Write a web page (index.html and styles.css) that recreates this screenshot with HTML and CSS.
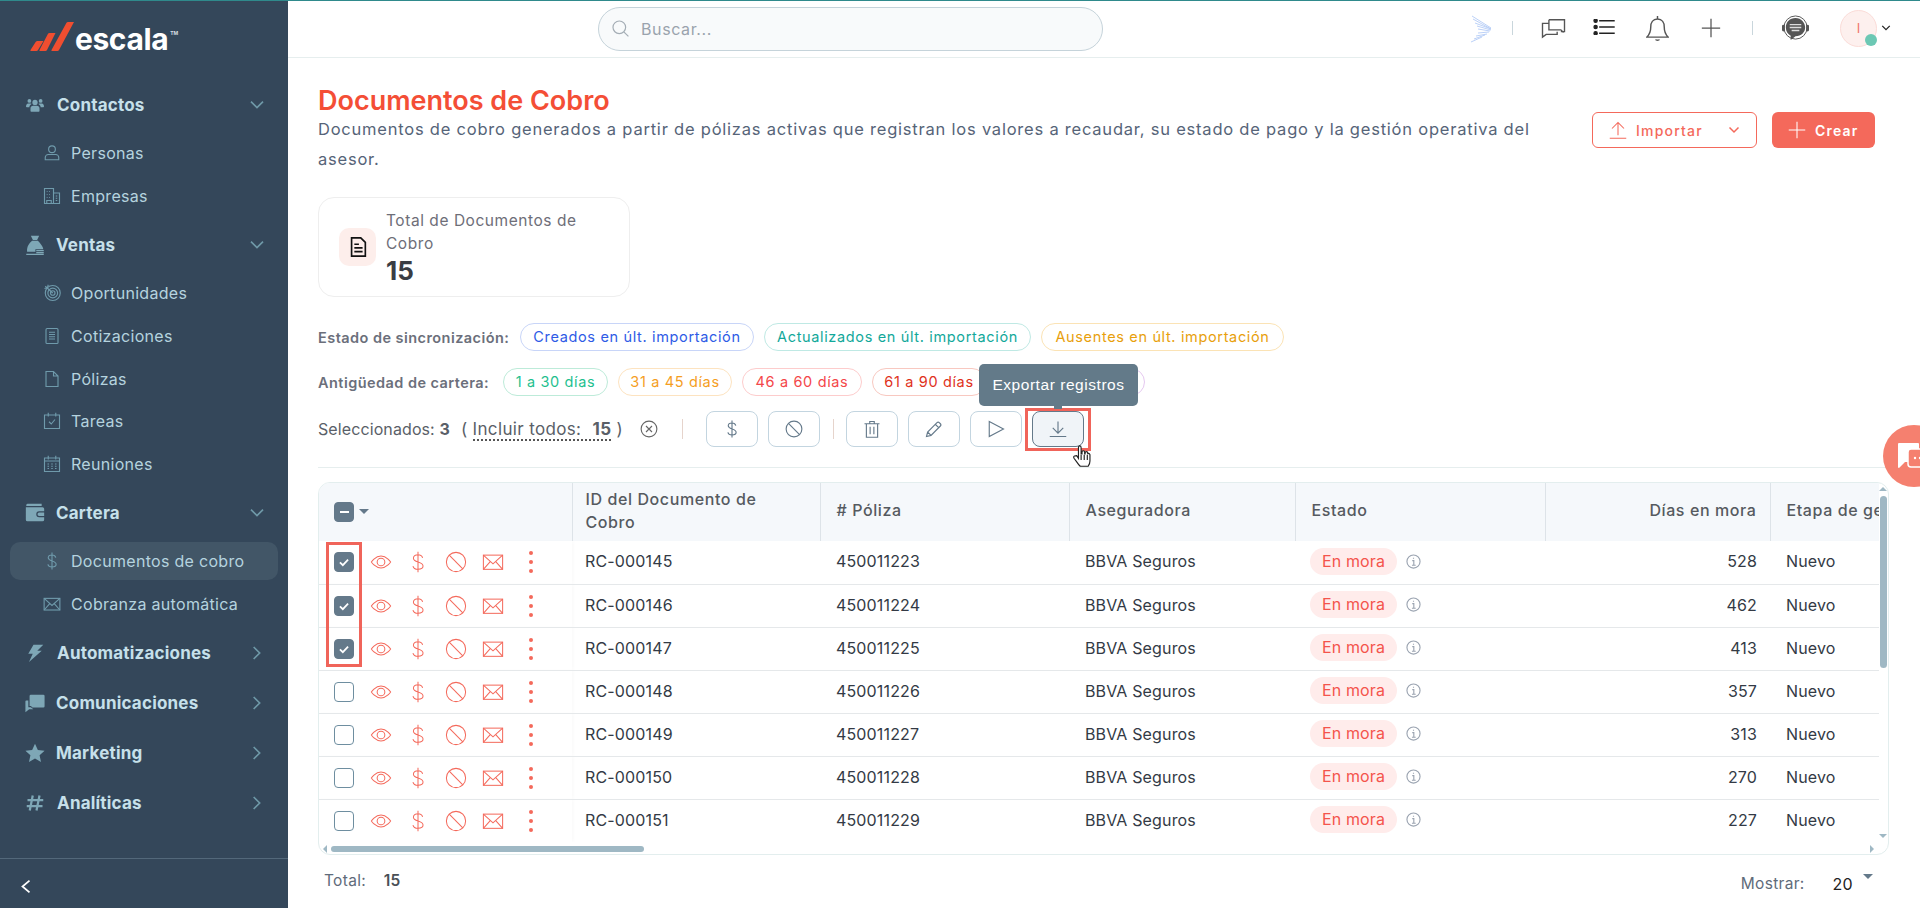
FILE: index.html
```html
<!DOCTYPE html>
<html lang="es">
<head>
  <meta charset="utf-8">
  <title>Documentos de Cobro</title>
  <link rel="stylesheet" href="styles.css">
</head>
<body>
  <svg class="sprite" xmlns="http://www.w3.org/2000/svg">
    <symbol id="i-eye" viewBox="0 0 24 24"><path d="M1.500 12S5.500 5.500 12 5.500 22.500 12 22.500 12 18.500 18.500 12 18.500 1.500 12 1.500 12z"/><circle cx="12" cy="12" r="4.200"/></symbol>
    <symbol id="i-dollar" viewBox="0 0 24 24"><path d="M17 7.500C16.500 5.300 14.500 4 12 4 9 4 7 5.600 7 7.800c0 5.200 10.500 3 10.500 8.600 0 2.300-2.300 3.600-5.500 3.600-2.800 0-5-1.300-5.500-3.500M12 .8v22.400"/></symbol>
    <symbol id="i-ban" viewBox="0 0 24 24"><circle cx="12" cy="12" r="10.500"/><path d="M4.600 4.600l14.800 14.800"/></symbol>
    <symbol id="i-mail" viewBox="0 0 24 24"><rect x="1.500" y="4.500" width="21" height="15.500"/><path d="M1.500 4.500L12 14 22.500 4.500M1.500 20l7.500-8.500M22.500 20L15 11.500"/></symbol>
    <symbol id="i-info" viewBox="0 0 24 24"><circle cx="12" cy="12" r="10.500"/><path d="M10 10.500h2.500V18M9.500 18h6M12 6v1.500"/></symbol>
    <symbol id="i-check" viewBox="0 0 24 24"><path d="M5 12.500l5 5L19 8"/></symbol>
    <symbol id="i-down" viewBox="0 0 24 24"><path d="M3 7l9 9 9-9"/></symbol>
    <symbol id="i-right" viewBox="0 0 24 24"><path d="M7 3l9 9-9 9"/></symbol>
  </svg>

  <aside class="sidebar">
    <div class="brand">
      <svg class="brand-mark" viewBox="0 0 44 30"><path d="M1 30h5.500q1 0 1.500-1L13.500 20H7.500q-1 0-1.700.700L.5 29q-.5 1 .5 1zM10 30h5.500q1 0 1.500-1L25.500 12H19.500q-1 0-1.500.7L9.500 29q-.5 1 .5 1zM22 30h5.500q1 0 1.500-1L44 1H38q-1 0-1.500.7L21.500 29q-.5 1 .5 1z"/></svg>
      <span class="brand-name">escala</span><span class="brand-tm">TM</span>
    </div>
    <nav class="nav">
      <a class="nav-head">
        <svg class="nav-icon" viewBox="0 0 24 24"><circle cx="12" cy="8.500" r="3.500"/><circle cx="4.500" cy="6.500" r="2.500"/><circle cx="19.500" cy="6.500" r="2.500"/><path d="M6 20v-3.500c0-2 1.500-3.500 3.500-3.500h5c2 0 3.500 1.500 3.500 3.500V20q0 1-1 1H7q-1 0-1-1zM0 14c0-2 1-4 3-4h3c.5 0 1 .2 1.300.5C5.500 11.500 4.500 13 4.500 15H1q-1 0-1-1zM24 14c0-2-1-4-3-4h-3c-.5 0-1 .2-1.300.5 1.800 1 2.800 2.500 2.800 4.500H23q1 0 1-1z"/></svg>
        <span class="nav-label">Contactos</span>
        <svg class="nav-arrow"><use href="#i-down"/></svg>
      </a>
      <div class="nav-subs">
        <a class="nav-sub"><svg class="sub-icon" viewBox="0 0 24 24"><circle cx="12" cy="7" r="4.500"/><path d="M3 21v-3c0-2 2-4 4-4h10c2 0 4 2 4 4v3z"/></svg>Personas</a>
        <a class="nav-sub"><svg class="sub-icon" viewBox="0 0 24 24"><path d="M2 22V2h12v20zM14 8h8v14h-8zM5 6h1M8 6h1M11 6h0M5 10h1M8 10h1M5 14h1M8 14h1M17 12h2M17 15h2M17 18h2M5 22v-4h6v4"/></svg>Empresas</a>
      </div>
      <a class="nav-head">
        <svg class="nav-icon nav-icon-big" viewBox="0 0 24 24"><path d="M7 1h10l-2.500 5h-5zM8.500 7h7c3 3 6 7 6.500 10H12.500v3H2.500C2 14 5 10 8.500 7zM13.500 18h9v1.500h-9zM13.500 20.500h9V22h-9zM1.500 22.500h21V24h-21z"/></svg>
        <span class="nav-label">Ventas</span>
        <svg class="nav-arrow"><use href="#i-down"/></svg>
      </a>
      <div class="nav-subs">
        <a class="nav-sub"><svg class="sub-icon" viewBox="0 0 24 24"><circle cx="13" cy="12" r="10"/><circle cx="13" cy="12" r="6.500"/><circle cx="13" cy="12" r="3"/><path d="M3 3l10 9M2 6l4-1 1-4"/></svg>Oportunidades</a>
        <a class="nav-sub"><svg class="sub-icon" viewBox="0 0 24 24"><rect x="4" y="2" width="16" height="20" rx="1.500"/><path d="M8 7h8M8 10h8M8 13h8M8 16h8"/></svg>Cotizaciones</a>
        <a class="nav-sub"><svg class="sub-icon" viewBox="0 0 24 24"><path d="M4 2h10l6 6v14H4zM14 2v6h6"/></svg>Pólizas</a>
        <a class="nav-sub"><svg class="sub-icon" viewBox="0 0 24 24"><path d="M2 4h20v18H2zM7 1v5M17 1v5M8 13l3 3 5-6"/></svg>Tareas</a>
        <a class="nav-sub"><svg class="sub-icon" viewBox="0 0 24 24"><path d="M2 4h20v18H2zM7 1v5M17 1v5M2 8h20M6 12h2M11 12h2M16 12h2M6 15h2M11 15h2M16 15h2M6 18h2M11 18h2M16 18h2"/></svg>Reuniones</a>
      </div>
      <a class="nav-head">
        <svg class="nav-icon nav-icon-big" viewBox="0 0 24 24"><path d="M3 1h17v2.500H1.500C1.500 2 2 1 3 1zM1 5h20q2 0 2 2v3h-6q-3.500 0-3.500 3.500t3.500 3.500h6v3q0 2-2 2H3q-2 0-2-2zM17 11.500h6v4h-6q-2 0-2-2t2-2z"/></svg>
        <span class="nav-label">Cartera</span>
        <svg class="nav-arrow"><use href="#i-down"/></svg>
      </a>
      <div class="nav-subs">
        <a class="nav-sub active"><svg class="sub-icon"><use href="#i-dollar"/></svg>Documentos de cobro</a>
        <a class="nav-sub"><svg class="sub-icon"><use href="#i-mail"/></svg>Cobranza automática</a>
      </div>
      <a class="nav-head">
        <svg class="nav-icon" viewBox="0 0 24 24"><path d="M10 1h13l-8 8h6L4 24l5-11H3z"/></svg>
        <span class="nav-label">Automatizaciones</span>
        <svg class="nav-arrow nav-arrow-right"><use href="#i-right"/></svg>
      </a>
      <a class="nav-head">
        <svg class="nav-icon nav-icon-big" viewBox="0 0 24 24"><path d="M7 2h15q1.500 0 1.500 1.500V16q0 1.500-1.500 1.500H9L7 15.500H5.500V3.500Q5.500 2 7 2zM1.500 9H4v8h3l3 2.500H5L.5 23V10q0-1 1-1z"/></svg>
        <span class="nav-label">Comunicaciones</span>
        <svg class="nav-arrow nav-arrow-right"><use href="#i-right"/></svg>
      </a>
      <a class="nav-head">
        <svg class="nav-icon nav-icon-big" viewBox="0 0 24 24"><path d="M12 1l3.400 7.400 8.100.9-6 5.500 1.700 8L12 18.700 4.800 22.800l1.700-8-6-5.500 8.100-.9z"/></svg>
        <span class="nav-label">Marketing</span>
        <svg class="nav-arrow nav-arrow-right"><use href="#i-right"/></svg>
      </a>
      <a class="nav-head">
        <svg class="nav-icon nav-icon-hash" viewBox="0 0 24 24"><path d="M9 2L5 22M18 2l-4 20M2 8h21M1 16h21"/></svg>
        <span class="nav-label">Analíticas</span>
        <svg class="nav-arrow nav-arrow-right"><use href="#i-right"/></svg>
      </a>
    </nav>
    <div class="side-foot">
      <svg class="collapse" viewBox="0 0 24 24"><path d="M18 2L6 12l12 10"/></svg>
    </div>
  </aside>

  <div class="main">
    <header class="topbar">
      <div class="search">
        <svg class="search-icon" viewBox="0 0 24 24"><circle cx="10.500" cy="10.500" r="8"/><path d="M16.500 16.500L22 22"/></svg>
        <span>Buscar...</span>
      </div>
      <div class="top-tools">
        <svg class="wing" viewBox="0 0 24 28"><path d="M3 1L22 13M4 4L22 14M6 8L22 14M8 11L22 15M9 14L21 16M9 18L20 17M7 21L18 19M5 24L16 20M2 27L13 22"/></svg>
        <span class="tool-sep"></span>
        <svg class="tool tool-chat" viewBox="0 0 26 24"><path d="M8 3h17v13h-4M8 3v11h13l3 3M8 7H1v15l4-3h12v-3"/></svg>
        <svg class="tool tool-list" viewBox="0 0 24 18"><circle cx="2" cy="2" r="1.800"/><circle cx="2" cy="9" r="1.800"/><circle cx="2" cy="16" r="1.800"/><path d="M6 2h17.500M6 9h17.500M6 16h17.500"/></svg>
        <svg class="tool tool-bell" viewBox="0 0 24 28"><path d="M12 1v3M12 4c-5 0-7 4-7 8 0 5-1 8-4 11h22c-3-3-4-6-4-11 0-4-2-8-7-8zM1 23h22M10 25.500c.5 1 3.500 1 4 0"/></svg>
        <svg class="tool tool-plus" viewBox="0 0 24 24"><path d="M12 1v22M1 12h22"/></svg>
        <span class="tool-sep tool-sep-r"></span>
        <svg class="tool-agent" viewBox="0 0 30 28"><circle cx="15" cy="13" r="12" fill="none" stroke="#555" stroke-width="1"/><path d="M15 3c-6 0-10 4-10 10 0 4 2 7 5 8.500V26l5-4c6 0 10-4 10-9s-4-10-10-10z"/><rect x="1" y="10" width="3" height="7" rx="1.500"/><rect x="26" y="10" width="3" height="7" rx="1.500"/><path class="agent-lines" d="M9 10h12M9 13h12M11 16h8"/></svg>
        <div class="avatar">I<span class="avatar-dot"></span></div>
        <svg class="avatar-arrow"><use href="#i-down"/></svg>
      </div>
    </header>

    <main class="content">
      <section class="page-head">
        <div class="page-text">
          <h1>Documentos de Cobro</h1>
          <p>Documentos de cobro generados a partir de pólizas activas que registran los valores a recaudar, su estado de pago y la gestión operativa del asesor.</p>
        </div>
        <div class="page-actions">
          <button class="btn btn-outline">
            <svg class="btn-icon" viewBox="0 0 24 24"><path d="M12 19V3M4 10l8-8 8 8M1 23h22"/></svg>
            <span>Importar</span>
            <svg class="btn-arrow"><use href="#i-down"/></svg>
          </button>
          <button class="btn btn-solid">
            <svg class="btn-icon" viewBox="0 0 24 24"><path d="M12 1v22M1 12h22"/></svg>
            <span>Crear</span>
          </button>
        </div>
      </section>

      <section class="stat-card">
        <div class="stat-icon">
          <svg viewBox="0 0 24 24"><path d="M5 2h10l5 5v15H5zM8 9h5M8 13h9M8 17h9"/></svg>
        </div>
        <div class="stat-text">
          <div class="stat-label">Total de Documentos de Cobro</div>
          <div class="stat-value">15</div>
        </div>
      </section>

      <div class="chip-row chip-row-sync">
        <span class="chip-title">Estado de sincronización:</span>
        <span class="chip chip-created">Creados en últ. importación</span>
        <span class="chip chip-updated">Actualizados en últ. importación</span>
        <span class="chip chip-missing">Ausentes en últ. importación</span>
      </div>
      <div class="chip-row chip-row-age">
        <span class="chip-title">Antigüedad de cartera:</span>
        <span class="chip chip-30">1 a 30 días</span>
        <span class="chip chip-45">31 a 45 días</span>
        <span class="chip chip-60">46 a 60 días</span>
        <span class="chip chip-90">61 a 90 días</span>
        <span class="chip chip-more"></span>
      </div>

      <div class="selection">
        <div class="sel-info">
          <span>Seleccionados: <b>3</b></span>
          <span class="sel-all">( <span class="sel-link">Incluir todos: <b>15</b></span> )</span>
          <svg class="sel-clear" viewBox="0 0 24 24"><circle cx="12" cy="12" r="10.500"/><path d="M8 8l8 8M16 8l-8 8"/></svg>
        </div>
        <span class="sel-sep sel-sep-first"></span>
        <button class="act"><svg><use href="#i-dollar"/></svg></button>
        <button class="act"><svg><use href="#i-ban"/></svg></button>
        <span class="sel-sep"></span>
        <button class="act"><svg viewBox="0 0 24 24"><path d="M2 5h20M9 5V2h6v3M4.500 5v18h15V5M9.500 9v10M14.500 9v10"/></svg></button>
        <button class="act"><svg viewBox="0 0 24 24"><path d="M2 22l1.500-6L16 3.500q1.500-1.500 3 0l1.500 1.500q1.500 1.500 0 3L8 20.500zM3.500 16L8 20.500M14 6l4.500 4.500"/></svg></button>
        <button class="act"><svg viewBox="0 0 24 24"><path d="M3 2l19 10L3 22z"/></svg></button>
        <button class="act act-hover">
          <svg viewBox="0 0 24 24"><path d="M12 2v15M5 10.500l7 7 7-7M1 22h22"/></svg>
          <span class="tooltip">Exportar registros</span>
          <svg class="hand" viewBox="0 0 20 26"><path d="M6 13V3q0-2 1.500-2T9 3v7l1 0V8q0-1.500 1.500-1.500T13 8v2h.5V9q0-1.500 1.500-1.500T16.500 9v1.500q0-1 1-1t1.500 1.500v7q0 3-2 6H8q-2-2-4-5l-3-4q-1-2 .5-2.500T4 12l2 3z"/><path d="M9 11v6M12.500 11v6M16 11v6"/></svg>
        </button>
      </div>

      <section class="table-frame">
        <div class="table-clip">
          <table class="grid">
            <colgroup>
              <col class="c-act"><col class="c-id"><col class="c-pol"><col class="c-ins"><col class="c-state"><col class="c-days"><col class="c-stage">
            </colgroup>
            <thead>
              <tr>
                <th class="sel-col"><div class="acts"><span class="box box-on box-minus"></span><span class="caret"></span></div></th>
                <th class="id-col">ID del Documento de<br>Cobro</th>
                <th># Póliza</th>
                <th>Aseguradora</th>
                <th>Estado</th>
                <th class="num">Días en mora</th>
                <th>Etapa de gestión</th>
              </tr>
            </thead>
            <tbody>
              <tr>
                <td class="sel-col"><div class="acts"><span class="box box-on"><svg><use href="#i-check"/></svg></span><svg class="ra"><use href="#i-eye"/></svg><svg class="ra"><use href="#i-dollar"/></svg><svg class="ra"><use href="#i-ban"/></svg><svg class="ra"><use href="#i-mail"/></svg><span class="dots"><i></i><i></i><i></i></span></div></td>
                <td class="id-col">RC-000145</td><td>450011223</td><td>BBVA Seguros</td>
                <td><span class="pill">En mora</span><svg class="info"><use href="#i-info"/></svg></td>
                <td class="num">528</td><td>Nuevo</td>
              </tr>
              <tr>
                <td class="sel-col"><div class="acts"><span class="box box-on"><svg><use href="#i-check"/></svg></span><svg class="ra"><use href="#i-eye"/></svg><svg class="ra"><use href="#i-dollar"/></svg><svg class="ra"><use href="#i-ban"/></svg><svg class="ra"><use href="#i-mail"/></svg><span class="dots"><i></i><i></i><i></i></span></div></td>
                <td class="id-col">RC-000146</td><td>450011224</td><td>BBVA Seguros</td>
                <td><span class="pill">En mora</span><svg class="info"><use href="#i-info"/></svg></td>
                <td class="num">462</td><td>Nuevo</td>
              </tr>
              <tr>
                <td class="sel-col"><div class="acts"><span class="box box-on"><svg><use href="#i-check"/></svg></span><svg class="ra"><use href="#i-eye"/></svg><svg class="ra"><use href="#i-dollar"/></svg><svg class="ra"><use href="#i-ban"/></svg><svg class="ra"><use href="#i-mail"/></svg><span class="dots"><i></i><i></i><i></i></span></div></td>
                <td class="id-col">RC-000147</td><td>450011225</td><td>BBVA Seguros</td>
                <td><span class="pill">En mora</span><svg class="info"><use href="#i-info"/></svg></td>
                <td class="num">413</td><td>Nuevo</td>
              </tr>
              <tr>
                <td class="sel-col"><div class="acts"><span class="box"></span><svg class="ra"><use href="#i-eye"/></svg><svg class="ra"><use href="#i-dollar"/></svg><svg class="ra"><use href="#i-ban"/></svg><svg class="ra"><use href="#i-mail"/></svg><span class="dots"><i></i><i></i><i></i></span></div></td>
                <td class="id-col">RC-000148</td><td>450011226</td><td>BBVA Seguros</td>
                <td><span class="pill">En mora</span><svg class="info"><use href="#i-info"/></svg></td>
                <td class="num">357</td><td>Nuevo</td>
              </tr>
              <tr>
                <td class="sel-col"><div class="acts"><span class="box"></span><svg class="ra"><use href="#i-eye"/></svg><svg class="ra"><use href="#i-dollar"/></svg><svg class="ra"><use href="#i-ban"/></svg><svg class="ra"><use href="#i-mail"/></svg><span class="dots"><i></i><i></i><i></i></span></div></td>
                <td class="id-col">RC-000149</td><td>450011227</td><td>BBVA Seguros</td>
                <td><span class="pill">En mora</span><svg class="info"><use href="#i-info"/></svg></td>
                <td class="num">313</td><td>Nuevo</td>
              </tr>
              <tr>
                <td class="sel-col"><div class="acts"><span class="box"></span><svg class="ra"><use href="#i-eye"/></svg><svg class="ra"><use href="#i-dollar"/></svg><svg class="ra"><use href="#i-ban"/></svg><svg class="ra"><use href="#i-mail"/></svg><span class="dots"><i></i><i></i><i></i></span></div></td>
                <td class="id-col">RC-000150</td><td>450011228</td><td>BBVA Seguros</td>
                <td><span class="pill">En mora</span><svg class="info"><use href="#i-info"/></svg></td>
                <td class="num">270</td><td>Nuevo</td>
              </tr>
              <tr>
                <td class="sel-col"><div class="acts"><span class="box"></span><svg class="ra"><use href="#i-eye"/></svg><svg class="ra"><use href="#i-dollar"/></svg><svg class="ra"><use href="#i-ban"/></svg><svg class="ra"><use href="#i-mail"/></svg><span class="dots"><i></i><i></i><i></i></span></div></td>
                <td class="id-col">RC-000151</td><td>450011229</td><td>BBVA Seguros</td>
                <td><span class="pill">En mora</span><svg class="info"><use href="#i-info"/></svg></td>
                <td class="num">227</td><td>Nuevo</td>
              </tr>
            </tbody>
          </table>
        </div>
        <span class="mark-boxes"></span>
        <span class="sb-v"></span>
        <span class="sb-h"></span>
        <span class="sb-arrow sb-up"></span>
        <span class="sb-arrow sb-dn"></span>
        <span class="sb-arrow sb-lf"></span>
        <span class="sb-arrow sb-rt"></span>
      </section>

      <footer class="table-foot">
        <span class="foot-total">Total: <b>15</b></span>
        <span class="foot-size">Mostrar: <span class="foot-num">20</span><span class="foot-caret"></span></span>
      </footer>
    </main>
  </div>

  <div class="chat-fab">
    <svg viewBox="0 0 30 28"><path d="M1 0h19q1 0 1 1v18H7l-6 6q-1 0-1-1V1q0-1 1-1z"/><rect class="fab-front" x="10" y="6" width="24" height="18" rx="3"/><circle class="fab-dot" cx="17" cy="15" r="1.200"/><circle class="fab-dot" cx="22" cy="15" r="1.200"/><circle class="fab-dot" cx="27" cy="15" r="1.200"/></svg>
  </div>
</body>
</html>
```
FILE: styles.css
```css
* {
  box-sizing: border-box;
}
html, body {
  height: 100%;
}
body {
  margin: 0;
  display: flex;
  overflow: hidden;
  border-top: 1px solid #2f8a8c;
  font-family: Inter, "Open Sans", sans-serif;
  font-size: 16px;
  color: #333a45;
  background: #fff;
}
.sprite {
  display: none;
}

/* sidebar */
.sidebar {
  flex: 0 0 288px;
  display: flex;
  flex-direction: column;
  background: #34475a;
  color: #b9d6e1;
}
.brand {
  height: 79px;
  display: flex;
  align-items: flex-start;
  padding: 20px 0 0 30px;
}
.brand-mark {
  width: 44px;
  height: 30px;
  fill: #f04e30;
}
.brand-name {
  margin-left: 1px;
  font-size: 30px;
  line-height: 36px;
  font-weight: 700;
  letter-spacing: -.4px;
  color: #fff;
}
.brand-tm {
  font-size: 5px;
  font-weight: 700;
  margin: 9px 0 0 2px;
  color: #d5dde2;
}
.nav {
  flex: 1;
}
.nav-head {
  height: 50px;
  display: flex;
  align-items: center;
  padding-left: 26px;
  font-weight: 700;
  font-size: 17px;
  letter-spacing: .2px;
  color: #c6e0ea;
}
.nav-icon {
  flex: 0 0 18px;
  width: 18px;
  height: 18px;
  margin-right: 13px;
  fill: #7ea7b6;
}
.nav-icon-big {
  flex-basis: 20px;
  width: 20px;
  height: 20px;
  margin: 0 11px 0 -1px;
}
.nav-icon-hash {
  fill: none;
  stroke: #7ea7b6;
  stroke-width: 3;
}
.nav-label {
  flex: 1;
}
.nav-arrow {
  width: 16px;
  height: 16px;
  margin-right: 23px;
  fill: none;
  stroke: #6f99a8;
  stroke-width: 2.500;
}
.nav-arrow-right {
  margin-right: 23px;
}
.nav-subs {
  padding-top: 4px;
}
.nav-sub {
  height: 38px;
  margin: 0 10px 4.900px;
  padding-left: 33px;
  display: flex;
  align-items: center;
  border-radius: 10px;
  font-size: 16px;
  letter-spacing: .3px;
  color: #b5d3df;
}
.nav-sub.active {
  background: #425667;
}
.sub-icon {
  flex: 0 0 18px;
  width: 18px;
  height: 18px;
  margin-right: 10px;
  fill: none;
  stroke: #6f9aab;
  stroke-width: 1.500;
}
.side-foot {
  height: 50px;
  border-top: 1px solid #53687a;
  padding: 19px 0 0 19px;
}
.collapse {
  display: block;
  width: 14px;
  height: 17px;
  fill: none;
  stroke: #fff;
  stroke-width: 3;
}

/* top bar */
.main {
  flex: 1;
  min-width: 0;
  display: flex;
  flex-direction: column;
}
.topbar {
  height: 57px;
  flex: none;
  display: flex;
  align-items: center;
  justify-content: space-between;
  padding: 0 0 0 310px;
  border-bottom: 1px solid #e6eeee;
}
.search {
  width: 505px;
  height: 44px;
  margin-top: -1px;
  display: flex;
  align-items: center;
  padding-left: 12px;
  border: 1px solid #c5d3da;
  border-radius: 22px;
  background: #f8fafb;
  font-size: 16px;
  letter-spacing: .6px;
  color: #9aa3ad;
}
.search-icon {
  width: 19px;
  height: 19px;
  margin-right: 11px;
  fill: none;
  stroke: #a4adb5;
  stroke-width: 1.500;
}
.top-tools {
  display: flex;
  align-items: center;
  padding: 0 29px 2px 0;
}
.wing {
  width: 24px;
  height: 28px;
  margin-top: 2px;
  fill: none;
  stroke: #b4ccf6;
  stroke-width: .9;
}
.tool-sep {
  width: 1px;
  height: 14px;
  margin: 0 28px 0 19px;
  background: #c9d6dc;
}
.tool-sep-r {
  margin: 0 28px 0 31px;
}
.tool {
  fill: none;
  stroke: #555;
  stroke-width: 1.500;
}
.tool-chat {
  width: 25px;
  height: 22px;
  margin-right: 27px;
}
.tool-list {
  width: 23px;
  height: 16px;
  margin: -3px 30px 0 0;
  stroke: #222;
  fill: #222;
}
.tool-bell {
  width: 23px;
  height: 27px;
  margin-right: 32px;
}
.tool-plus {
  width: 20px;
  height: 20px;
}
.tool-agent {
  width: 29px;
  height: 27px;
  fill: #555;
  margin-right: 30px;
}
.agent-lines {
  fill: none;
  stroke: #ddd;
  stroke-width: 1.500;
}
.avatar {
  position: relative;
  width: 37px;
  height: 37px;
  display: flex;
  align-items: center;
  justify-content: center;
  border: 1px solid #fbdcd8;
  border-radius: 50%;
  background: #fdf0ee;
  font-size: 13px;
  color: #f0766a;
}
.avatar-dot {
  position: absolute;
  right: -1px;
  bottom: 0;
  width: 12px;
  height: 12px;
  border-radius: 50%;
  background: #6cc8b4;
}
.avatar-arrow {
  width: 10px;
  height: 10px;
  margin-left: 4px;
  fill: none;
  stroke: #222;
  stroke-width: 3;
}

/* page */
.content {
  flex: 1;
  padding: 0 31px 0 30px;
}
.page-head {
  display: flex;
  justify-content: space-between;
  padding: 29px 14px 0 0;
}
.page-text {
  width: 1230px;
}
h1 {
  margin: 0;
  height: 27px;
  font-size: 27px;
  line-height: 28px;
  font-weight: 600;
  color: #f44e36;
}
.page-text p {
  margin: 0;
  font-size: 16.500px;
  letter-spacing: .78px;
  line-height: 30px;
  color: #566478;
}
.page-actions {
  display: flex;
  gap: 15px;
  padding-top: 25px;
}
.btn {
  height: 36px;
  display: flex;
  align-items: center;
  border-radius: 6px;
  font-family: inherit;
  font-size: 14px;
  font-weight: 500;
  letter-spacing: 1.200px;
}
.btn-outline {
  width: 165px;
  padding: 0 16px;
  border: 1px solid #f4695b;
  background: #fff;
  color: #f4695b;
}
.btn-solid {
  width: 103px;
  padding: 0 16px;
  border: 0;
  background: #f4695b;
  color: #fff;
  font-weight: 600;
}
.btn-icon {
  width: 18px;
  height: 18px;
  margin-right: 9px;
  fill: none;
  stroke: currentColor;
  stroke-width: 1.400;
}
.btn-arrow {
  width: 12px;
  height: 12px;
  margin-left: auto;
  fill: none;
  stroke: currentColor;
  stroke-width: 3;
}
.stat-card {
  width: 312px;
  height: 100px;
  margin-top: 23px;
  display: flex;
  align-items: center;
  padding-left: 20px;
  border: 1px solid #eeeeee;
  border-radius: 16px;
}
.stat-icon {
  width: 37px;
  height: 38px;
  margin-right: 10px;
  display: flex;
  align-items: center;
  justify-content: center;
  border-radius: 10px;
  background: #fdeeeb;
}
.stat-icon svg {
  width: 22px;
  height: 22px;
  fill: none;
  stroke: #111;
  stroke-width: 1.800;
}
.stat-text {
  padding-top: 2px;
}
.stat-label {
  width: 215px;
  font-size: 15.500px;
  letter-spacing: .55px;
  line-height: 23px;
  color: #6e6e78;
}
.stat-value {
  font-size: 26px;
  line-height: 32px;
  font-weight: 700;
  color: #3a3d44;
}
.chip-row {
  height: 28px;
  display: flex;
  align-items: center;
  gap: 10px;
}
.chip-row-sync {
  margin-top: 26px;
}
.chip-row-age {
  margin-top: 17px;
}
.chip-title {
  font-size: 14.500px;
  letter-spacing: .45px;
  font-weight: 600;
  white-space: nowrap;
  color: #6b6f7b;
}
.chip-row-sync .chip-title {
  width: 192px;
}
.chip-row-age .chip-title {
  width: 175px;
}
.chip {
  height: 28px;
  padding-bottom: 2px;
  display: flex;
  align-items: center;
  justify-content: center;
  border: 1px solid;
  border-radius: 14px;
  font-size: 14.500px;
  letter-spacing: .65px;
  white-space: nowrap;
}
.chip-created { width: 234px; color: #2e5be6; border-color: #c8d5f8; }
.chip-updated { width: 267px; color: #12a89a; border-color: #bfe9e4; }
.chip-missing { width: 243px; color: #e8a00c; border-color: #fbe3b5; }
.chip-30 { width: 105px; color: #1fbf8f; border-color: #bdebd9; }
.chip-45 { width: 114px; color: #f59e1f; border-color: #fde3c0; }
.chip-60 { width: 120px; color: #f4474a; border-color: #fdcccc; }
.chip-90 { width: 114px; color: #e0321c; border-color: #f8c8c0; }
.chip-more { width: 149px; border-color: #e5c8f0; }

.selection {
  height: 57px;
  margin-top: 15px;
  display: flex;
  align-items: flex-start;
  color: #5a5f68;
  font-size: 16px;
  letter-spacing: .1px;
  border-bottom: 1px solid #e6eeee;
}
.sel-info {
  width: 364px;
  height: 36px;
  padding-right: 24px;
  display: flex;
  align-items: center;
  white-space: nowrap;
}
.sel-all {
  margin-left: 11px;
  font-size: 17px;
  letter-spacing: .35px;
}
.sel-link {
  border-bottom: 2px dotted #555;
}
.sel-link b {
  margin-left: 6px;
}
.sel-clear {
  width: 18px;
  height: 18px;
  margin-left: auto;
  fill: none;
  stroke: #666;
  stroke-width: 1.500;
}
.sel-sep {
  width: 1px;
  height: 20px;
  margin: 8px 12px 0 3px;
  background: #e6d4cc;
}
.sel-sep-first {
  margin: 8px 23px 0 0;
}
.act {
  position: relative;
  width: 52px;
  height: 36px;
  margin-right: 10px;
  padding: 0;
  display: flex;
  align-items: center;
  justify-content: center;
  border: 1px solid #c3d5e0;
  border-radius: 8px;
  background: #fff;
}
.act svg {
  width: 18px;
  height: 18px;
  fill: none;
  stroke: #64798a;
  stroke-width: 1.500;
}
.act-hover {
  background: #f0f4f8;
  border-color: #64798a;
}
.act-hover::before {
  content: '';
  position: absolute;
  left: -8px;
  right: -8px;
  top: -4px;
  bottom: -5px;
  border: 3px solid #f0645a;
}
.tooltip {
  position: absolute;
  left: -54px;
  top: -48px;
  width: 159px;
  height: 42px;
  display: flex;
  align-items: center;
  justify-content: center;
  border-radius: 5px;
  background: #637a89;
  font-size: 15.500px;
  letter-spacing: .55px;
  white-space: nowrap;
  color: #fff;
}
.tooltip::after {
  content: '';
  position: absolute;
  left: 75px;
  bottom: -3px;
  width: 8px;
  height: 3px;
  background: #637a89;
}
.act .hand {
  position: absolute;
  left: 40px;
  top: 33px;
  width: 18px;
  height: 23px;
  fill: #fff;
  stroke: #222;
  stroke-width: 1.300;
}

/* table */
.table-frame {
  position: relative;
  height: 373px;
  margin-top: 14px;
  border: 1px solid #e3eeee;
  border-radius: 12px;
  overflow: hidden;
}
.table-clip {
  width: 1560px;
  height: 359px;
  overflow: hidden;
}
.grid {
  width: 1651px;
  table-layout: fixed;
  border-collapse: collapse;
}
.c-act { width: 253px; }
.c-id { width: 248px; }
.c-pol { width: 249px; }
.c-ins { width: 226px; }
.c-state { width: 250px; }
.c-days { width: 225px; }
.c-stage { width: 200px; }
.grid th {
  height: 58px;
  padding: 0 16px 3px;
  background: #f5f8fb;
  border-left: 1px solid #dde3e8;
  text-align: left;
  font-size: 16px;
  letter-spacing: .6px;
  line-height: 23px;
  font-weight: 500;
  white-space: nowrap;
  color: #555a60;
}
.grid th.sel-col {
  border-left: 0;
  padding: 0 0 0 15px;
}
.grid td {
  height: 43px;
  padding: 0 16px 2px;
  border-bottom: 1px solid #e5e8ea;
  white-space: nowrap;
  letter-spacing: .15px;
  color: #333a45;
}
.grid .id-col {
  padding-left: 13px;
}
.grid td.sel-col {
  padding: 0 0 0 15px;
  box-shadow: 2px 0 3px rgba(0,0,0,.02);
}
.grid th.num,
.grid td.num {
  text-align: right;
  padding-right: 13px;
}
.acts {
  display: flex;
  align-items: center;
  gap: 15.500px;
}
.box {
  flex: none;
  width: 20px;
  height: 20px;
  display: flex;
  align-items: center;
  justify-content: center;
  border: 1px solid #6e8ea0;
  border-radius: 4px;
  background: #fff;
}
.box-on {
  background: #64798a;
  border-color: #64798a;
}
.box svg {
  width: 14px;
  height: 14px;
  fill: none;
  stroke: #fff;
  stroke-width: 3;
}
.box-minus::before {
  content: '';
  width: 9px;
  height: 2px;
  background: #fff;
}
.caret {
  margin-left: -11px;
  margin-top: -1px;
  border: 5px solid transparent;
  border-top-color: #64798a;
  border-bottom: 0;
}
.ra {
  flex: none;
  width: 22px;
  height: 22px;
  fill: none;
  stroke: #f4695b;
  stroke-width: 1.100;
}
.dots {
  width: 22px;
  display: flex;
  flex-direction: column;
  align-items: center;
  gap: 5px;
}
.dots i {
  width: 4px;
  height: 4px;
  border-radius: 50%;
  background: #f4695b;
}
.pill {
  display: inline-block;
  width: 87px;
  height: 27px;
  margin-left: -1px;
  border-radius: 14px;
  background: #ffeceb;
  text-align: center;
  line-height: 26px;
  color: #f4544c;
  vertical-align: middle;
}
.info {
  width: 15px;
  height: 15px;
  margin-left: 9px;
  vertical-align: middle;
  fill: none;
  stroke: #9aa3b0;
  stroke-width: 1.800;
}
.mark-boxes {
  position: absolute;
  left: 7px;
  top: 59px;
  width: 36px;
  height: 125px;
  border: 3px solid #f0645a;
}
.sb-v {
  position: absolute;
  right: 1px;
  top: 13px;
  width: 7px;
  height: 172px;
  border-radius: 4px;
  background: #9fb8c4;
}
.sb-h {
  position: absolute;
  left: 12px;
  bottom: 2px;
  width: 313px;
  height: 6px;
  border-radius: 3px;
  background: #9fb8c4;
}
.sb-arrow {
  position: absolute;
  border: 4px solid transparent;
}
.sb-up { right: 1px; top: 0; border-bottom-color: #9fb8c4; }
.sb-dn { right: 1px; bottom: 12px; border-top-color: #9fb8c4; }
.sb-lf { left: 0; bottom: 1px; border-right-color: #9fb8c4; }
.sb-rt { right: 10px; bottom: 1px; border-left-color: #9fb8c4; }

.table-foot {
  display: flex;
  justify-content: space-between;
  padding: 16px 16px 0 6px;
  font-size: 15.500px;
  letter-spacing: .3px;
  color: #5f6b7a;
}
.foot-total b {
  margin-left: 13px;
  font-weight: 600;
  color: #4a4f56;
}
.foot-size {
  display: flex;
  align-items: flex-start;
  padding-top: 3px;
}
.foot-num {
  margin-left: 28px;
  font-size: 16px;
  color: #222;
}
.foot-caret {
  margin: 0 0 0 10px;
  border: 5px solid transparent;
  border-top-color: #64798a;
  border-bottom: 0;
}

/* floating chat button */
.chat-fab {
  position: absolute;
  left: 1883px;
  top: 425px;
  width: 62px;
  height: 62px;
  padding: 18px 0 0 15px;
  border-radius: 50%;
  background: #f5806f;
}
.chat-fab svg {
  display: block;
  width: 30px;
  height: 28px;
  overflow: visible;
  fill: #fff;
}
.chat-fab svg .fab-front {
  fill: #f5806f;
  stroke: #fff;
  stroke-width: 1.500;
}
.chat-fab svg .fab-dot {
  fill: #fff;
}
```
